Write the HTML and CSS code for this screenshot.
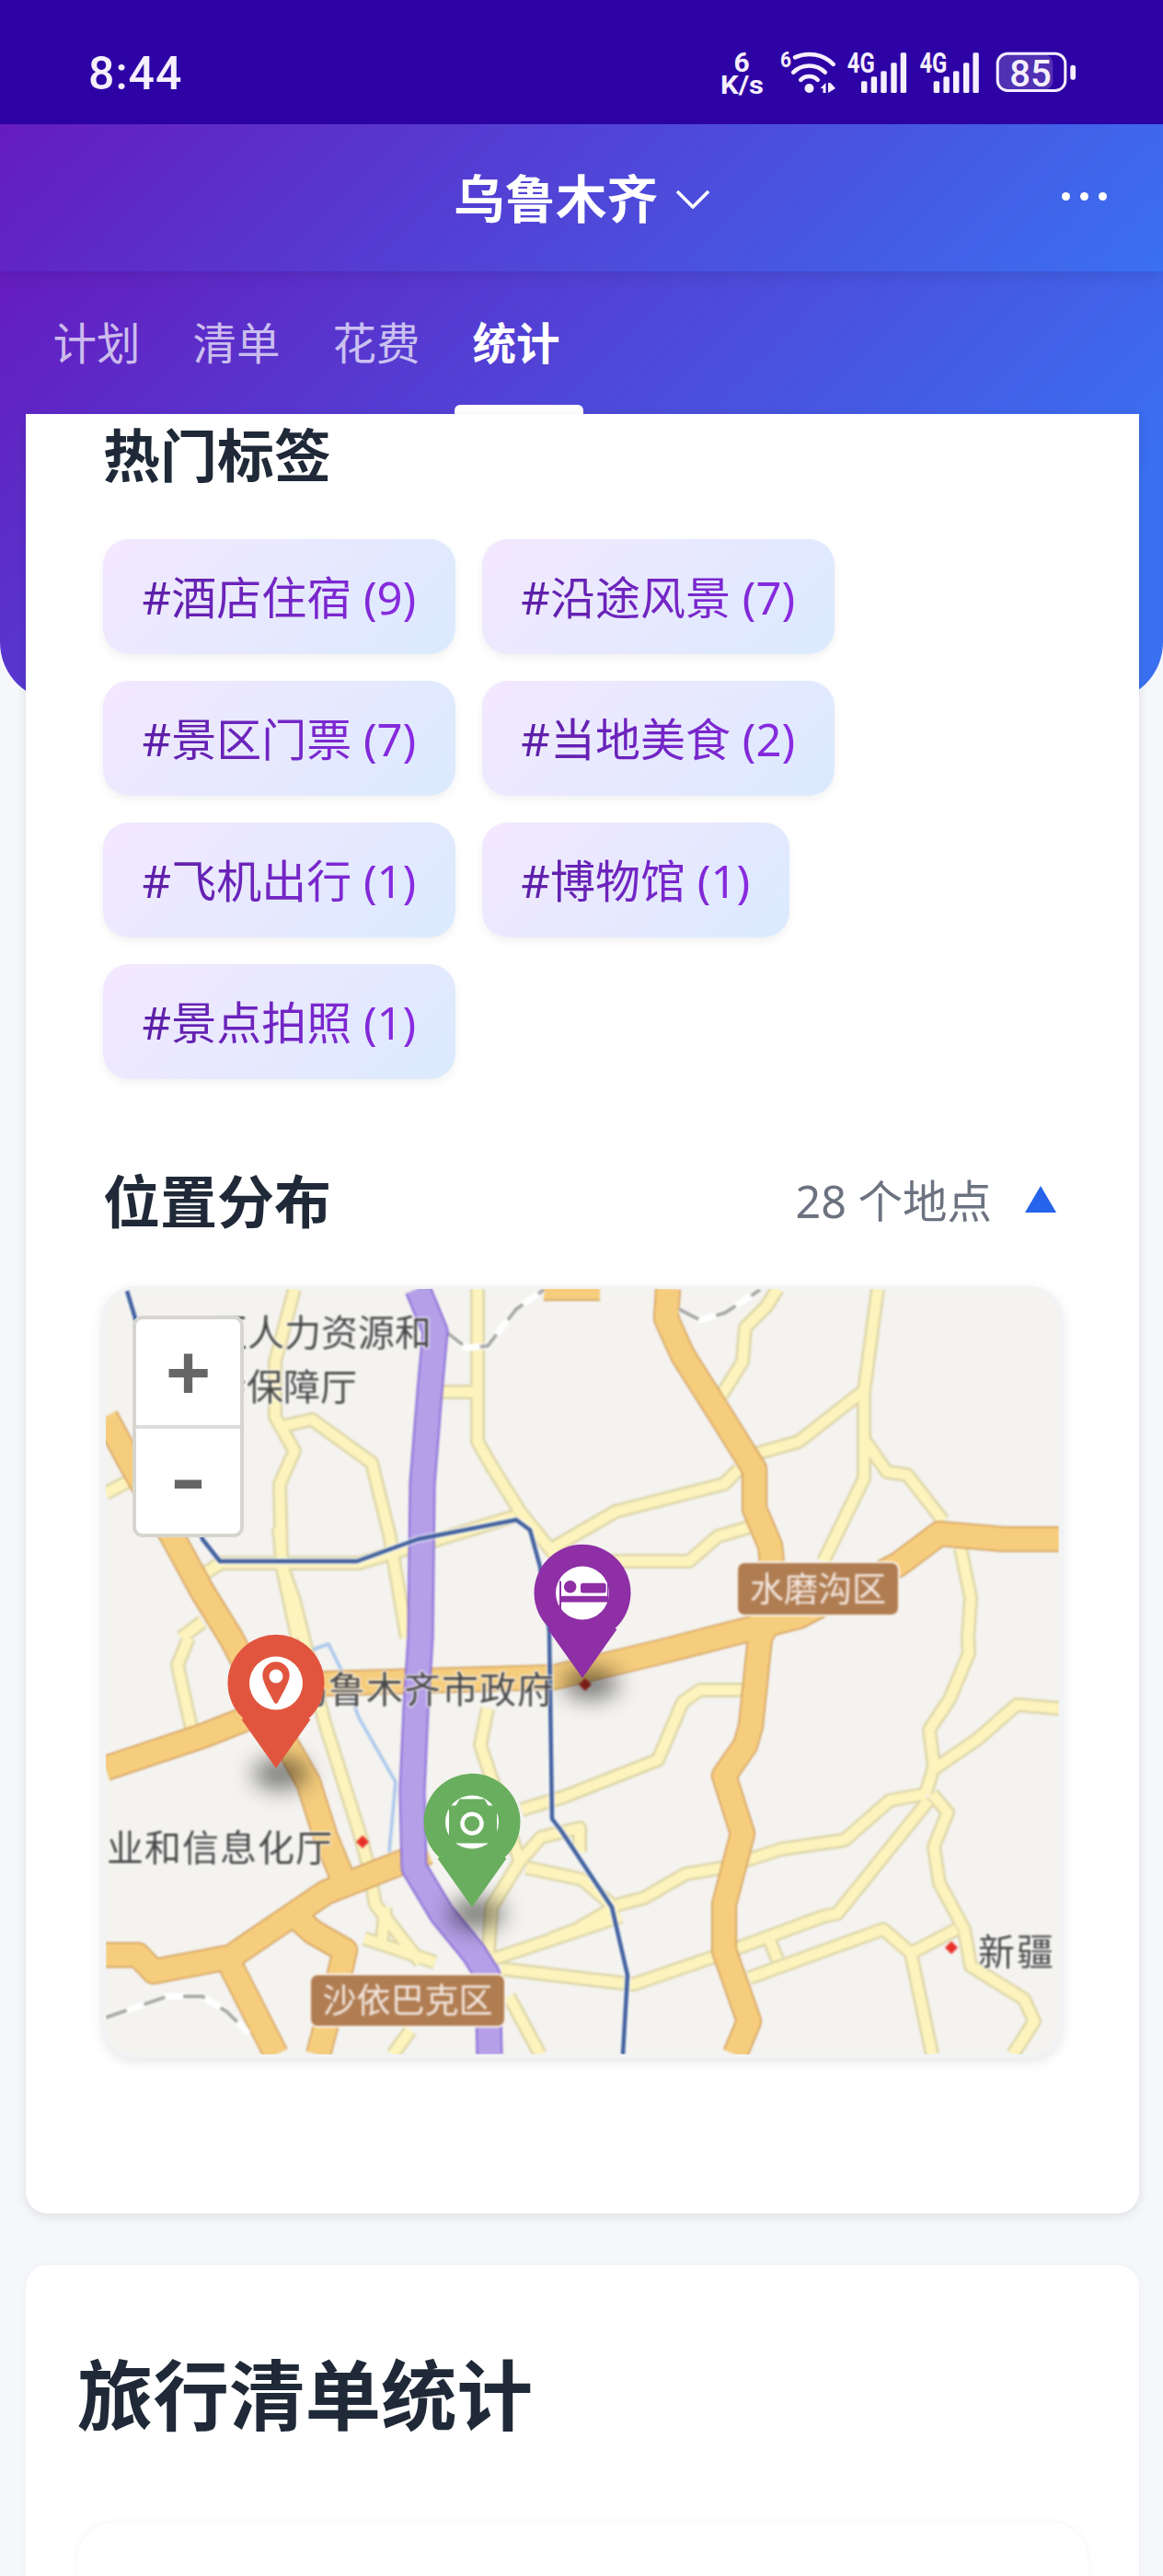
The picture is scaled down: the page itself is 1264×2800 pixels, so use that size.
FILE: index.html
```html
<!DOCTYPE html>
<html lang="zh-CN">
<head>
<meta charset="utf-8">
<title>乌鲁木齐 - 统计</title>
<link rel="stylesheet" href="styles.css">
</head>
<body>

<div class="phone">

  <div class="status-bar">
    <span class="clock">8:44</span>
    <svg class="status-icons" viewBox="780 50 400 60" width="400" height="60">
      <text class="st-bold" x="806" y="78" font-size="30" text-anchor="middle">6</text>
      <text class="st-bold" x="783" y="101.5" font-size="28" textLength="47" lengthAdjust="spacingAndGlyphs">K/s</text>

      <text class="st-bold" x="848" y="73" font-size="24" textLength="12" lengthAdjust="spacingAndGlyphs">6</text>
      <path class="st-line" d="M864 62.4A37 37 0 0 1 905.7 69.8M862.2 78.7A24.5 24.5 0 0 1 896.8 78.7M870.3 86.8A13 13 0 0 1 888.7 86.8"/>
      <circle class="st-fill" cx="879.5" cy="96" r="5"/>
      <path class="st-fill" d="M897.5 90V101H894.5V96H891.5ZM900 90H902.5L908 96 900 101Z"/>

      <g id="signal">
        <text class="st-bold" x="920.7" y="79" font-size="31" textLength="30" lengthAdjust="spacingAndGlyphs">4G</text>
        <rect class="st-fill" x="936" y="88.3" width="6.4" height="12.7" rx="1.5"/>
        <rect class="st-fill" x="946.7" y="83.3" width="6.4" height="17.7" rx="1.5"/>
        <rect class="st-fill" x="957.3" y="77.3" width="6.4" height="23.7" rx="1.5"/>
        <rect class="st-fill" x="968.3" y="68.3" width="6.4" height="32.7" rx="1.5"/>
        <rect class="st-fill" x="978.7" y="57.3" width="6.4" height="43.7" rx="1.5"/>
      </g>
      <use href="#signal" x="78.7"/>

      <rect class="batt-level" x="1085" y="59" width="59.3" height="39" rx="10"/>
      <rect class="batt-shell" x="1084.2" y="58.2" width="73.6" height="40.3" rx="11"/>
      <text class="batt-num" x="1120" y="94" font-size="40" text-anchor="middle">85</text>
      <rect class="st-fill" x="1163.3" y="70.7" width="5.7" height="16" rx="2.8"/>
    </svg>
  </div>

  <div class="top-bar">
    <div class="city">
      <span>乌鲁木齐</span>
      <svg class="chevron" viewBox="0 0 36 20" width="36" height="20"><path d="M1 1 18 18 35 1"/></svg>
    </div>
    <div class="more"><i></i><i></i><i></i></div>
  </div>

  <div class="hero">
    <div class="tabs">
      <a class="tab">计划</a>
      <a class="tab">清单</a>
      <a class="tab">花费</a>
      <a class="tab active">统计</a>
    </div>
  </div>

  <div class="content">

    <div class="card card-tags">
      <h3 class="section-title">热门标签</h3>
      <div class="tags">
        <span class="tag"><b>#酒店住宿 (9)</b></span>
        <span class="tag"><b>#沿途风景 (7)</b></span>
        <span class="tag"><b>#景区门票 (7)</b></span>
        <span class="tag"><b>#当地美食 (2)</b></span>
        <span class="tag"><b>#飞机出行 (1)</b></span>
        <span class="tag"><b>#博物馆 (1)</b></span>
        <span class="tag"><b>#景点拍照 (1)</b></span>
      </div>

      <div class="section-head">
        <h3 class="section-title">位置分布</h3>
        <div class="place-count">
          <span>28 个地点</span>
          <i class="arrow-up"></i>
        </div>
      </div>

      <div class="map-frame">
        <div class="map">
          <svg class="map-canvas" viewBox="115 1401 1036 832" width="1036" height="832">
            <defs>
              <g id="roads-yellow">
                <path d="M320 1401 299 1480V1540L320 1577 304 1613 306 1700 323 1780"/>
                <path d="M303 1660 307 1703 320 1740 353 1873 390 1990 400 2027 408 2070 457 2133"/>
                <path d="M308 1550 339 1543 404 1590 423 1667 442 1780"/>
                <path d="M519 1401V1567L534 1593 565 1643 603 1690"/>
                <path d="M480 1513H519"/>
                <path d="M215 1715 240 1699H390L454 1680 560 1648"/>
                <path d="M600 1683 669 1643 787 1613 803 1597"/>
                <path d="M600 1697H749L780 1670 814 1660"/>
                <path d="M845 1401 833 1420 810 1443 807 1480 784 1517"/>
                <path d="M822 1580 868 1567 937 1513"/>
                <path d="M954 1401 939 1513V1607L895 1697"/>
                <path d="M941 1567 964 1600 986 1603 1025 1653"/>
                <path d="M1044 1683 1055 1737 1052 1780 1053 1797 1032 1847 1010 1880 1015 1920 1006 1950"/>
                <path d="M1151 1857 1105 1853 1063 1890 1015 1923"/>
                <path d="M567 1967 613 1953 715 1913 742 1850 761 1837H807"/>
                <path d="M600 2107 627 2097 673 2070 700 2063 745 2037 787 2030 818 2020 849 2010 918 2000 967 1957 1006 1950"/>
                <path d="M545 2140 688 2157 776 2127 895 2083 910 2080 1009 1957"/>
                <path d="M814 2150 960 2097 990 2123 1040 2097"/>
                <path d="M1013 1950 1030 1970 1015 2007 1021 2047 1048 2097 1055 2137 1113 2173 1124 2197 1101 2233"/>
                <path d="M990 2123 1013 2233"/>
                <path d="M837 2110 845 2130"/>
                <path d="M534 2130 675 2083"/>
                <path d="M530 2137 534 2073 565 2023 522 1897 530 1857"/>
                <path d="M565 2023 588 1997 630 1987V2013"/>
                <path d="M572 2030 633 2043 668 2073"/>
                <path d="M205 1780 193 1810 209 1883"/>
                <path d="M115 1623 140 1610"/>
                <path d="M197 1780 220 1763"/>
                <path d="M396 2107 473 2133"/>
                <path d="M419 2073 415 2110"/>
                <path d="M553 2170 587 2233"/>
                <path d="M446 2207 427 2233"/>
              </g>
              <g id="roads-orange">
                <path d="M115 1540 140 1587 189 1673 220 1730 251 1780 312 1897 335 1937 354 1997 373 2043"/>
                <path d="M115 1922 220 1887 263 1870 353 1830 603 1823 720 1795 868 1757 977 1700 1021 1667 1090 1673 1151 1673"/>
                <path d="M726 1401 724 1433 742 1473 780 1533 820 1597V1640L837 1680 839 1700V1756L826 1780 816 1876 810 1897 787 1930 807 1993 787 2070V2120L814 2197 799 2233"/>
                <path d="M465 2013 354 2057 251 2127 167 2143 150 2125 115 2125"/>
                <path d="M250 2135 300 2233"/>
                <path d="M320 2082 340 2100 375 2120 368 2150 346 2233"/>
                <path d="M591 1400H652"/>
              </g>
            </defs>

            <rect x="115" y="1401" width="1036" height="832" class="tile-bg"/>

            <g class="tile">
              <use href="#roads-yellow" class="yellow-case"/>
              <use href="#roads-yellow" class="yellow-fill"/>
              <path class="water" d="M340 1793 357 1787 370 1813 390 1867 430 1937 423 2013"/>
              <use href="#roads-orange" class="orange-case"/>
              <use href="#roads-orange" class="orange-fill"/>
              <path class="rail-case" d="M484 1447 507 1465 530 1463 561 1423 591 1402M738 1423 761 1435 788 1427 826 1402M115 2193 182 2170H220L247 2187 270 2210"/>
              <path class="rail" d="M484 1447 507 1465 530 1463 561 1423 591 1402M738 1423 761 1435 788 1427 826 1402M115 2193 182 2170H220L247 2187 270 2210"/>
              <path class="ring-case" d="M454 1401 473 1447 467 1513 459 1613 457 1780 452 1857 448 1947 450 2030 480 2080 515 2123 530 2147 532 2233"/>
              <path class="ring" d="M454 1401 473 1447 467 1513 459 1613 457 1780 452 1857 448 1947 450 2030 480 2080 515 2123 530 2147 532 2233"/>
              <path class="metro-case" d="M138 1403 147 1433 184 1550 220 1673 239 1697H388L454 1673 561 1652 576 1663 587 1703 597 1773 600 1977 610 1990 665 2073 682 2147 677 2233"/>
              <path class="metro" d="M138 1403 147 1433 184 1550 220 1673 239 1697H388L454 1673 561 1652 576 1663 587 1703 597 1773 600 1977 610 1990 665 2073 682 2147 677 2233"/>

              <path class="poi-dark" d="M636 1824 643 1831 636 1838 629 1831Z"/>
              <path class="poi" d="M394 1995 401 2002 394 2009 387 2002Z"/>
              <path class="poi" d="M1034 2110 1041 2117 1034 2124 1027 2117Z"/>

              <text class="map-label" x="469" y="1463" text-anchor="end">区人力资源和</text>
              <text class="map-label" x="388" y="1522" text-anchor="end">会保障厅</text>
              <text class="map-label" x="603" y="1851" text-anchor="end" letter-spacing="1">乌鲁木齐市政府</text>
              <text class="map-label" x="362" y="2023" text-anchor="end" letter-spacing="1">业和信息化厅</text>
              <text class="map-label" x="1063" y="2136" letter-spacing="2">新疆</text>

              <rect class="district-box" x="801" y="1698" width="176" height="58" rx="8"/>
              <text class="district-text" x="889" y="1741" text-anchor="middle">水磨沟区</text>
              <rect class="district-box" x="337" y="2146" width="212" height="57" rx="8"/>
              <text class="district-text" x="443" y="2188" text-anchor="middle">沙依巴克区</text>
            </g>

            <ellipse class="pin-shadow" cx="305" cy="1928" rx="30" ry="17"/>
            <ellipse class="pin-shadow" cx="642" cy="1830" rx="30" ry="17"/>
            <ellipse class="pin-shadow" cx="518" cy="2080" rx="30" ry="17"/>

            <g transform="translate(247.5 1777)">
              <path class="pin-red" d="M17 91A52.5 52.5 0 1 1 88 91L90 92 52.5 145 15 92Z"/>
              <circle class="pin-white" cx="52.5" cy="52.5" r="29"/>
              <path class="pin-red" d="M37.8 44A14.7 14.7 0 0 1 67.2 44C67.2 52 57 68 54.5 73.5A2.2 2.2 0 0 1 50.5 73.5C48 68 37.8 52 37.8 44Z"/>
              <circle class="pin-white" cx="52.5" cy="45" r="7.5"/>
            </g>

            <g transform="translate(580.5 1679)">
              <path class="pin-purple" d="M17 91A52.5 52.5 0 1 1 88 91L90 92 52.5 145 15 92Z"/>
              <circle class="pin-white" cx="52.5" cy="52.5" r="29"/>
              <g class="pin-purple">
                <circle cx="39.2" cy="45.8" r="6.8"/>
                <rect x="50.5" y="41.8" width="27.7" height="10.7" rx="2.5"/>
                <rect x="29.5" y="55.8" width="50" height="6.7"/>
                <rect x="27.5" y="39.5" width="2" height="31"/>
                <rect x="79.5" y="42" width="1.5" height="27"/>
              </g>
            </g>

            <g transform="translate(460.5 1928)">
              <path class="pin-green" d="M17 91A52.5 52.5 0 1 1 88 91L90 92 52.5 145 15 92Z"/>
              <circle class="pin-white" cx="52.5" cy="52.5" r="29"/>
              <path class="pin-green" d="M27.5 34.5H35L39 27.5H66L70 34.5H79.5V75.5H27.5Z"/>
              <circle class="pin-lens" cx="52.5" cy="54.2" r="10.5"/>
            </g>
          </svg>

          <div class="zoom-control">
            <a class="zoom-btn">+</a>
            <a class="zoom-btn zoom-out">-</a>
          </div>
        </div>
      </div>
    </div>

    <div class="card card-stats">
      <h2 class="card-title">旅行清单统计</h2>
      <div class="inner-card"></div>
    </div>

  </div>
</div>

</body>
</html>
```

FILE: styles.css
```css
* {
  box-sizing: border-box;
}

body {
  margin: 0;
  background-color: #f5f7fb;
  font-family: "Noto Sans", "Noto Sans CJK SC", sans-serif;
}

.phone {
  width: 1264px;
  height: 2800px;
  overflow: hidden;
}

/* status bar */
.status-bar {
  height: 135px;
  padding: 25px 84px 0 96px;
  background-color: #2e03a6;
  display: flex;
  align-items: center;
  justify-content: space-between;
}

.clock {
  font-family: Roboto, sans-serif;
  font-size: 50px;
  font-weight: 500;
  color: #f6effd;
  letter-spacing: 1px;
}

.status-icons {
  display: block;
}

.st-bold {
  font-family: Roboto, sans-serif;
  font-weight: 700;
  fill: #f6effd;
}

.st-fill {
  fill: #f6effd;
}

.st-line {
  fill: none;
  stroke: #f6effd;
  stroke-width: 4.6;
  stroke-linecap: round;
}

.batt-level {
  fill: #5031b2;
}

.batt-shell {
  fill: none;
  stroke: #f6effd;
  stroke-width: 3;
}

.batt-num {
  font-family: Roboto, sans-serif;
  font-weight: 500;
  fill: #f6effd;
}

/* top bar */
.top-bar {
  position: relative;
  z-index: 2;
  height: 160px;
  padding-bottom: 5px;
  background: linear-gradient(135deg, #651cbf, #3a70f0);
  box-shadow: 0 4px 16px rgba(0, 0, 0, 0.1);
  display: flex;
  align-items: center;
  justify-content: center;
}

.city {
  display: flex;
  align-items: center;
  gap: 20px;
  color: #fff;
  font-family: "Noto Sans CJK SC", sans-serif;
  font-size: 55.5px;
  font-weight: 700;
  line-height: 70px;
}

.chevron {
  margin-top: 8px;
}

.chevron path {
  fill: none;
  stroke: #fff;
  stroke-width: 3.6;
}

.more {
  position: absolute;
  right: 61px;
  top: 74px;
  display: flex;
  gap: 11px;
}

.more i {
  width: 9px;
  height: 9px;
  border-radius: 50%;
  background-color: #fff;
}

/* tabs */
.hero {
  height: 467px;
  background: linear-gradient(135deg, #651cbf 0%, #3a70f0 85%);
  border-radius: 0 0 64px 64px;
}

.tabs {
  height: 155px;
  padding-left: 35px;
  display: flex;
  gap: 12px;
}

.tab {
  width: 140px;
  line-height: 152px;
  text-align: center;
  font-family: "Noto Sans CJK SC", sans-serif;
  font-size: 47.5px;
  color: rgba(255, 255, 255, 0.7);
  position: relative;
}

.tab.active {
  color: #fff;
  font-weight: 700;
}

.tab.active::after {
  content: "";
  position: absolute;
  left: 3px;
  right: -3px;
  bottom: 0;
  height: 10px;
  background-color: #fff;
  border-radius: 6px 6px 0 0;
}

/* cards */
.content {
  margin-top: -312px;
  padding: 0 26px 0 28px;
  position: relative;
}

.card {
  background-color: #fff;
  box-shadow: 0 3px 12px rgba(0, 0, 0, 0.1);
}

.card-tags {
  padding: 7px 84px 169px;
  border-radius: 0 0 24px 24px;
}

.section-title {
  margin: 0;
  font-family: "Noto Sans CJK SC", sans-serif;
  font-size: 62px;
  font-weight: 700;
  line-height: 70px;
  color: #1f2937;
}

.tags {
  margin-top: 59px;
  display: flex;
  flex-wrap: wrap;
  gap: 29px;
  width: 900px;
}

.tag {
  height: 125px;
  padding: 0 42.5px 4px;
  border-radius: 28px;
  background: linear-gradient(135deg, #f3e8ff, #dbeafe);
  box-shadow: 0 4px 10px rgba(0, 0, 0, 0.06);
  display: flex;
  align-items: center;
  font-size: 49px;
}

.tag b {
  font-weight: 400;
  background: linear-gradient(90deg, #5b1fa6, #8a2be2);
  -webkit-background-clip: text;
  background-clip: text;
  color: transparent;
}

.section-head {
  margin-top: 95px;
  display: flex;
  align-items: center;
  justify-content: space-between;
}

.place-count {
  display: flex;
  align-items: center;
  gap: 36px;
  padding-right: 6px;
  font-size: 48.5px;
  color: #6b7280;
}

.arrow-up {
  width: 0;
  height: 0;
  border-left: 17.5px solid transparent;
  border-right: 17.5px solid transparent;
  border-bottom: 29px solid #2563eb;
}

/* map */
.map-frame {
  margin: 60px -1px 0;
  padding: 3px 4px 4px;
  background-color: #f1f3f5;
  border-radius: 36px;
  box-shadow: 0 4px 14px rgba(0, 0, 0, 0.1);
}

.map {
  position: relative;
  width: 1036px;
  height: 832px;
  border-radius: 32px;
  overflow: hidden;
}

.map-canvas {
  display: block;
}

.tile-bg {
  fill: #f4f3ef;
}

.tile {
  filter: blur(1px);
  fill: none;
  stroke-linejoin: round;
}

.yellow-case {
  stroke: #dcd5a8;
  stroke-width: 16;
}

.yellow-fill {
  stroke: #fdf3bd;
  stroke-width: 11;
}

.orange-case {
  stroke: #cf9a5a;
  stroke-width: 28;
}

.orange-fill {
  stroke: #f6cd7d;
  stroke-width: 25;
}

.water {
  stroke: #a9c6ec;
  stroke-width: 3.5;
}

.rail-case {
  stroke: #fff;
  stroke-width: 7;
}

.rail {
  stroke: #a8a8a6;
  stroke-width: 4;
  stroke-dasharray: 24 20;
}

.ring-case {
  stroke: #8a6ed8;
  stroke-width: 29;
}

.ring {
  stroke: #b59fe8;
  stroke-width: 25;
}

.metro-case {
  stroke: #fff;
  stroke-width: 8;
  opacity: 0.6;
}

.metro {
  stroke: #3f5f9e;
  stroke-width: 4.5;
}

.poi {
  fill: #e8312a;
}

.poi-dark {
  fill: #c9302a;
}

.map-label {
  font-family: "Noto Sans CJK SC", sans-serif;
  font-size: 40px;
  fill: #474747;
  stroke: rgba(255, 255, 255, 0.7);
  stroke-width: 3;
  paint-order: stroke;
}

.district-box {
  fill: #b07d52;
  stroke: #fbf6ee;
  stroke-width: 2;
}

.district-text {
  font-family: "Noto Sans CJK SC", sans-serif;
  font-size: 37px;
  fill: #f3e6de;
}

.pin-shadow {
  fill: #000;
  opacity: 0.5;
  filter: blur(12px);
}

.pin-red {
  fill: #e1553f;
}

.pin-purple {
  fill: #8e2fa6;
}

.pin-green {
  fill: #69ae5e;
}

.pin-white {
  fill: #fff;
}

.pin-lens {
  fill: none;
  stroke: #fff;
  stroke-width: 4.4;
}

.zoom-control {
  position: absolute;
  left: 29px;
  top: 29px;
  width: 121px;
  height: 241px;
  border: 4px solid #d6d5d0;
  border-radius: 11px;
  background-color: #fff;
  overflow: hidden;
}

.zoom-btn {
  display: block;
  height: 115px;
  line-height: 117px;
  text-align: center;
  font-family: "Liberation Sans", sans-serif;
  font-size: 84px;
  font-weight: 700;
  color: #666;
}

.zoom-out {
  height: 118px;
  line-height: 101px;
  border-top: 4px solid #ddd;
  font-size: 120px;
  font-weight: 400;
}

/* second card */
.card-stats {
  margin-top: 56px;
  padding: 87px 56px 0;
  border-radius: 24px;
  box-shadow: 0 0 8px rgba(0, 0, 0, 0.03);
}

.card-title {
  margin: 0;
  font-family: "Noto Sans CJK SC", sans-serif;
  font-size: 82.5px;
  font-weight: 700;
  line-height: 100px;
  color: #1f2937;
}

.inner-card {
  margin-top: 93px;
  height: 240px;
  border-radius: 40px;
  background-color: #fff;
  box-shadow: 0 0 10px rgba(0, 0, 0, 0.05);
}
```
